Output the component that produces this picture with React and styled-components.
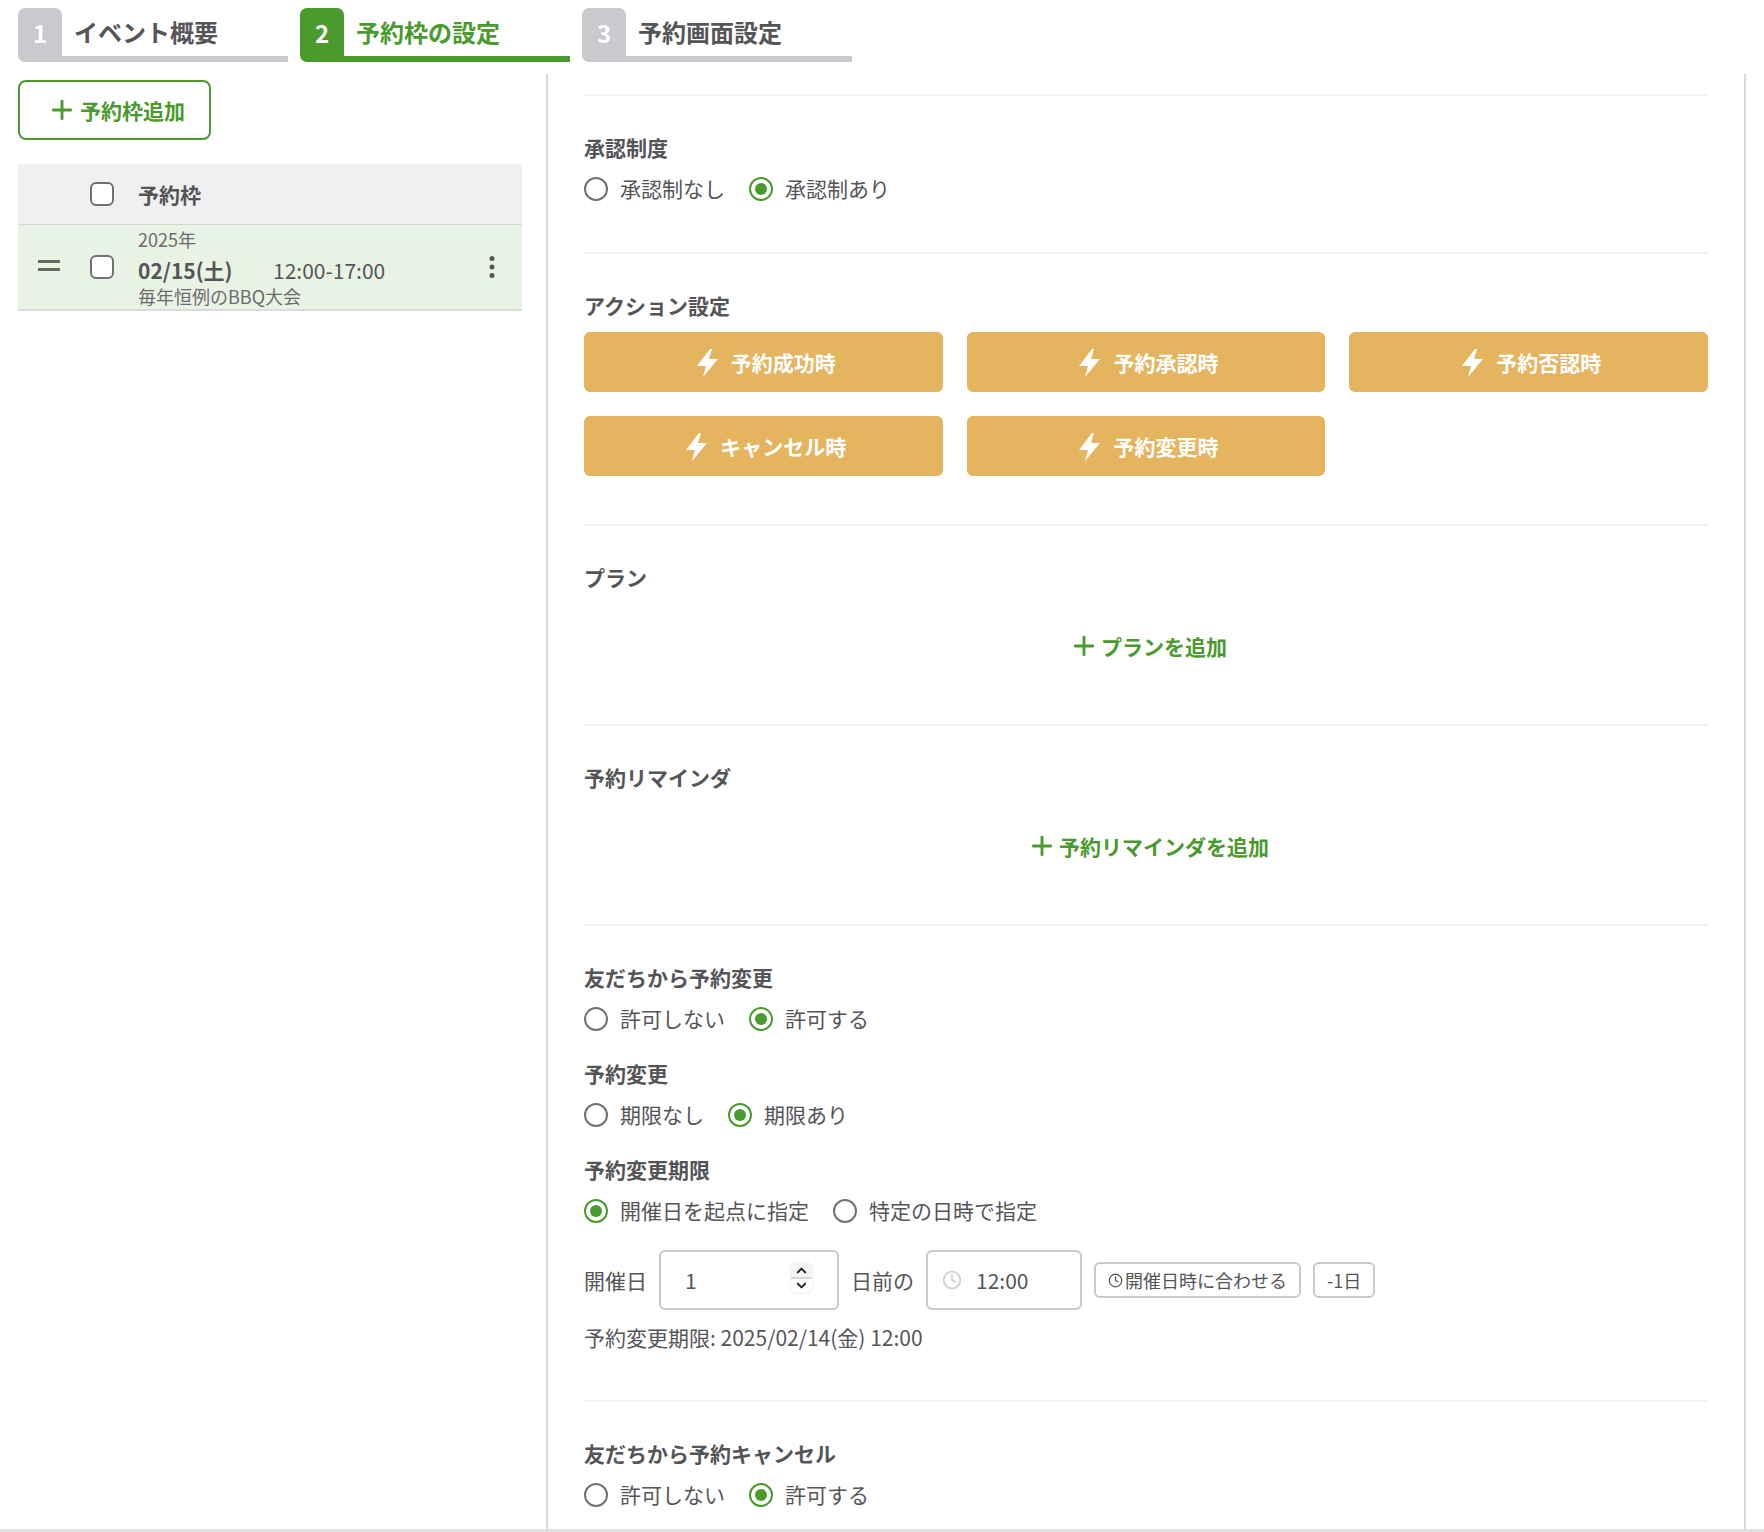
import React from 'react';
import styled, { createGlobalStyle } from 'styled-components';
import { Plus, Clock, ChevronUp, ChevronDown } from 'lucide-react';

const GREEN = '#4a9a2e';
const GRAY = '#c9c9ce';
const TEXT = '#555558';

const GlobalStyle = createGlobalStyle`
  html, body {
    margin: 0;
    padding: 0;
    background: #ffffff;
  }
  body {
    font-family: "Noto Sans CJK JP", "Noto Sans", sans-serif;
    color: ${TEXT};
    font-size: 21px;
  }
  * {
    box-sizing: border-box;
  }
`;

const Page = styled.div`
  width: 1764px;
  height: 1532px;
  display: flex;
  flex-direction: column;
  overflow: hidden;
  border-bottom: 3px solid #dfdfe1;
`;

const Steps = styled.div`
  display: flex;
  gap: 12px;
  padding: 8px 0 0 18px;
  margin-bottom: 12px;
`;

const Step = styled.div`
  display: flex;
  width: 270px;
  height: 54px;
  color: ${(p) => (p.$active ? GREEN : TEXT)};
  --step-color: ${(p) => (p.$active ? GREEN : GRAY)};
`;

const StepNumber = styled.div`
  width: 44px;
  height: 54px;
  padding-bottom: 6px;
  display: flex;
  align-items: center;
  justify-content: center;
  background: var(--step-color);
  border-radius: 7px 7px 0 7px;
  color: #ffffff;
  font-size: 24px;
  font-weight: 700;
`;

const StepLabel = styled.div`
  flex: 1;
  display: flex;
  align-items: center;
  padding: 0 0 2px 12px;
  border-bottom: 6px solid var(--step-color);
  font-size: 24px;
  font-weight: 700;
`;

const Main = styled.div`
  flex: 1;
  min-height: 0;
  display: flex;
`;

const LeftPane = styled.div`
  width: 548px;
  padding: 6px 24px 0 18px;
  border-right: 2px solid #d7d7da;
`;

const AddFrameButton = styled.button`
  display: flex;
  align-items: center;
  gap: 3px;
  width: 193px;
  height: 60px;
  padding: 0 0 0 27px;
  margin-bottom: 24px;
  background: #ffffff;
  border: 2px solid ${GREEN};
  border-radius: 8px;
  color: ${GREEN};
  font-family: inherit;
  font-size: 21px;
  font-weight: 700;
`;

const TableHead = styled.div`
  display: grid;
  grid-template-columns: 72px 48px 1fr;
  align-items: center;
  height: 61px;
  background: #f0f0f2;
  border-bottom: 1px solid #d5d5d8;
  font-weight: 700;
`;

const TableRow = styled.div`
  display: grid;
  grid-template-columns: 72px 48px 1fr 60px;
  align-items: center;
  height: 86px;
  background: #e9f3e4;
  border-bottom: 2px solid #d9dbd8;
`;

const Handle = styled.div`
  width: 22px;
  height: 11px;
  margin: -3px 0 0 20px;
  border-top: 3px solid #666669;
  border-bottom: 3px solid #666669;
`;

const CheckBox = styled.span`
  display: block;
  width: 24px;
  height: 24px;
  background: #ffffff;
  border: 2px solid #717174;
  border-radius: 6px;
  grid-column: 2;
`;

const FrameInfo = styled.div`
  display: flex;
  flex-direction: column;
  padding-top: 1px;
`;

const FrameYear = styled.div`
  font-size: 18px;
  line-height: 20px;
  color: #6b6b6e;
`;

const FrameDate = styled.div`
  display: flex;
  margin-top: 6px;
  font-size: 21px;
  line-height: 30px;
`;

const FrameDay = styled.span`
  width: 135px;
  font-weight: 700;
`;

const FrameName = styled.div`
  font-size: 18px;
  line-height: 22px;
  color: #6b6b6e;
`;

const KebabIcon = styled.svg`
  width: 8px;
  height: 24px;
  margin: -1px 0 0 26px;
  fill: #555558;
`;

const RightPane = styled.div`
  width: 1198px;
  height: 100%;
  padding: 20px 36px 0;
  border-right: 2px solid #d7d7da;
`;

const Section = styled.section`
  padding: 38px 0 ${(p) => p.$bottom || 48}px;
  border-top: 2px solid #f2f2f3;
`;

const FieldLabel = styled.div`
  font-size: 21px;
  font-weight: 700;
  line-height: 26px;
  padding-bottom: 2px;
  margin-top: ${(p) => (p.$sub ? '27px' : '0')};
`;

const RadioRow = styled.div`
  display: flex;
  gap: 24px;
  margin-top: 13px;
`;

const RadioItem = styled.label`
  display: flex;
  align-items: center;
  gap: 12px;
  height: 28px;
  line-height: 28px;
`;

const RadioText = styled.span`
  margin-top: -2px;
`;

const RadioMark = styled.span`
  position: relative;
  display: block;
  width: 24px;
  height: 24px;
  border: 2px solid ${(p) => (p.$checked ? GREEN : '#717174')};
  border-radius: 50%;

  &::after {
    content: '';
    display: ${(p) => (p.$checked ? 'block' : 'none')};
    position: absolute;
    top: 4px;
    left: 4px;
    width: 12px;
    height: 12px;
    border-radius: 50%;
    background: ${GREEN};
  }
`;

const ActionGrid = styled.div`
  display: grid;
  grid-template-columns: repeat(3, 1fr);
  gap: 24px;
  margin-top: 12px;
`;

const ActionButton = styled.button`
  display: flex;
  align-items: center;
  justify-content: center;
  gap: 13px;
  height: 60px;
  padding: 0 0 0 6px;
  background: #e4b45f;
  border: none;
  border-radius: 6px;
  color: #ffffff;
  font-family: inherit;
  font-size: 21px;
  font-weight: 700;
`;

const BoltIcon = styled.svg`
  width: 21px;
  height: 28px;
  margin-top: 2px;
  fill: #ffffff;
`;

const AddLink = styled.div`
  display: flex;
  align-items: center;
  justify-content: center;
  gap: 2px;
  height: 28px;
  margin-top: 40px;
  padding: 0 0 0 4px;
  margin-bottom: 16px;
  color: ${GREEN};
  font-weight: 700;
`;

const DeadlineRow = styled.div`
  display: flex;
  align-items: center;
  margin-top: 25px;
`;

const InlineText = styled.span`
  margin-right: ${(p) => p.$gap}px;
`;

const Field = styled.div`
  position: relative;
  display: flex;
  align-items: center;
  width: ${(p) => p.$width}px;
  height: 60px;
  padding-left: ${(p) => p.$pad}px;
  margin-right: ${(p) => p.$gap}px;
  border: 2px solid ${GRAY};
  border-radius: 6px;
`;

const Spinner = styled.div`
  position: absolute;
  top: 11px;
  right: 25px;
  width: 21px;
  height: 30px;
  display: flex;
  flex-direction: column;
  align-items: center;
  justify-content: space-between;
  border-radius: 6px;
  background: linear-gradient(#f5f5f5, #f5f5f5 48%, #d8d8d8 48%, #d8d8d8 54%, #ffffff 54%);
  box-shadow: 0 0 2px rgba(0, 0, 0, 0.2);
  color: #222222;
`;

const FieldClock = styled(Clock)`
  color: #cfcfd2;
  margin-right: 14px;
`;

const SmallButton = styled.button`
  display: flex;
  align-items: center;
  gap: 2px;
  height: 36px;
  padding: 0 ${(p) => p.$pad}px;
  margin-left: ${(p) => p.$gap}px;
  background: #ffffff;
  border: 2px solid ${GRAY};
  border-radius: 6px;
  color: ${TEXT};
  font-family: inherit;
  font-size: 18px;
`;

const DeadlineNote = styled.div`
  margin-top: 13px;
  line-height: 28px;
`;

const Radios = ({ items, checked }) => (
  <RadioRow>
    {items.map((item, i) => (
      <RadioItem key={item}>
        <RadioMark $checked={i === checked} />
        <RadioText>{item}</RadioText>
      </RadioItem>
    ))}
  </RadioRow>
);

const Bolt = () => (
  <BoltIcon viewBox="0 0 21 28">
    <path d="M13 0 L0 17 H9 L6 28 L21 10 H12 L15 0 Z" />
  </BoltIcon>
);

const actions = ['予約成功時', '予約承認時', '予約否認時', 'キャンセル時', '予約変更時'];

const App = () => {
  return (
    <>
      <GlobalStyle />
      <Page>
        <Steps>
          <Step>
            <StepNumber>1</StepNumber>
            <StepLabel>イベント概要</StepLabel>
          </Step>
          <Step $active>
            <StepNumber>2</StepNumber>
            <StepLabel>予約枠の設定</StepLabel>
          </Step>
          <Step>
            <StepNumber>3</StepNumber>
            <StepLabel>予約画面設定</StepLabel>
          </Step>
        </Steps>
        <Main>
          <LeftPane>
            <AddFrameButton>
              <Plus size={30} strokeWidth={2.3} />
              予約枠追加
            </AddFrameButton>
            <TableHead>
              <CheckBox />
              <span>予約枠</span>
            </TableHead>
            <TableRow>
              <Handle />
              <CheckBox />
              <FrameInfo>
                <FrameYear>2025年</FrameYear>
                <FrameDate>
                  <FrameDay>02/15(土)</FrameDay>
                  <span>12:00-17:00</span>
                </FrameDate>
                <FrameName>毎年恒例のBBQ大会</FrameName>
              </FrameInfo>
              <KebabIcon viewBox="0 0 8 24">
                <circle cx="4" cy="3.5" r="2.5" />
                <circle cx="4" cy="12" r="2.5" />
                <circle cx="4" cy="20.5" r="2.5" />
              </KebabIcon>
            </TableRow>
          </LeftPane>
          <RightPane>
            <Section $bottom={49}>
              <FieldLabel>承認制度</FieldLabel>
              <Radios items={['承認制なし', '承認制あり']} checked={1} />
            </Section>
            <Section>
              <FieldLabel>アクション設定</FieldLabel>
              <ActionGrid>
                {actions.map((name) => (
                  <ActionButton key={name}>
                    <Bolt />
                    {name}
                  </ActionButton>
                ))}
              </ActionGrid>
            </Section>
            <Section>
              <FieldLabel>プラン</FieldLabel>
              <AddLink>
                <Plus size={30} strokeWidth={2.3} />
                プランを追加
              </AddLink>
            </Section>
            <Section>
              <FieldLabel>予約リマインダ</FieldLabel>
              <AddLink>
                <Plus size={30} strokeWidth={2.3} />
                予約リマインダを追加
              </AddLink>
            </Section>
            <Section $bottom={49}>
              <FieldLabel>友だちから予約変更</FieldLabel>
              <Radios items={['許可しない', '許可する']} checked={1} />
              <FieldLabel $sub>予約変更</FieldLabel>
              <Radios items={['期限なし', '期限あり']} checked={1} />
              <FieldLabel $sub>予約変更期限</FieldLabel>
              <Radios items={['開催日を起点に指定', '特定の日時で指定']} checked={0} />
              <DeadlineRow>
                <InlineText $gap={12}>開催日</InlineText>
                <Field $width={180} $pad={24} $gap={12}>
                  1
                  <Spinner>
                    <ChevronUp size={15} strokeWidth={3.2} />
                    <ChevronDown size={15} strokeWidth={3.2} />
                  </Spinner>
                </Field>
                <InlineText $gap={12}>日前の</InlineText>
                <Field $width={156} $pad={14} $gap={0}>
                  <FieldClock size={20} />
                  12:00
                </Field>
                <SmallButton $gap={12} $pad={12}>
                  <Clock size={15} />
                  開催日時に合わせる
                </SmallButton>
                <SmallButton $gap={12} $pad={12}>-1日</SmallButton>
              </DeadlineRow>
              <DeadlineNote>予約変更期限: 2025/02/14(金) 12:00</DeadlineNote>
            </Section>
            <Section>
              <FieldLabel>友だちから予約キャンセル</FieldLabel>
              <Radios items={['許可しない', '許可する']} checked={1} />
            </Section>
          </RightPane>
        </Main>
      </Page>
    </>
  );
};

export default App;
